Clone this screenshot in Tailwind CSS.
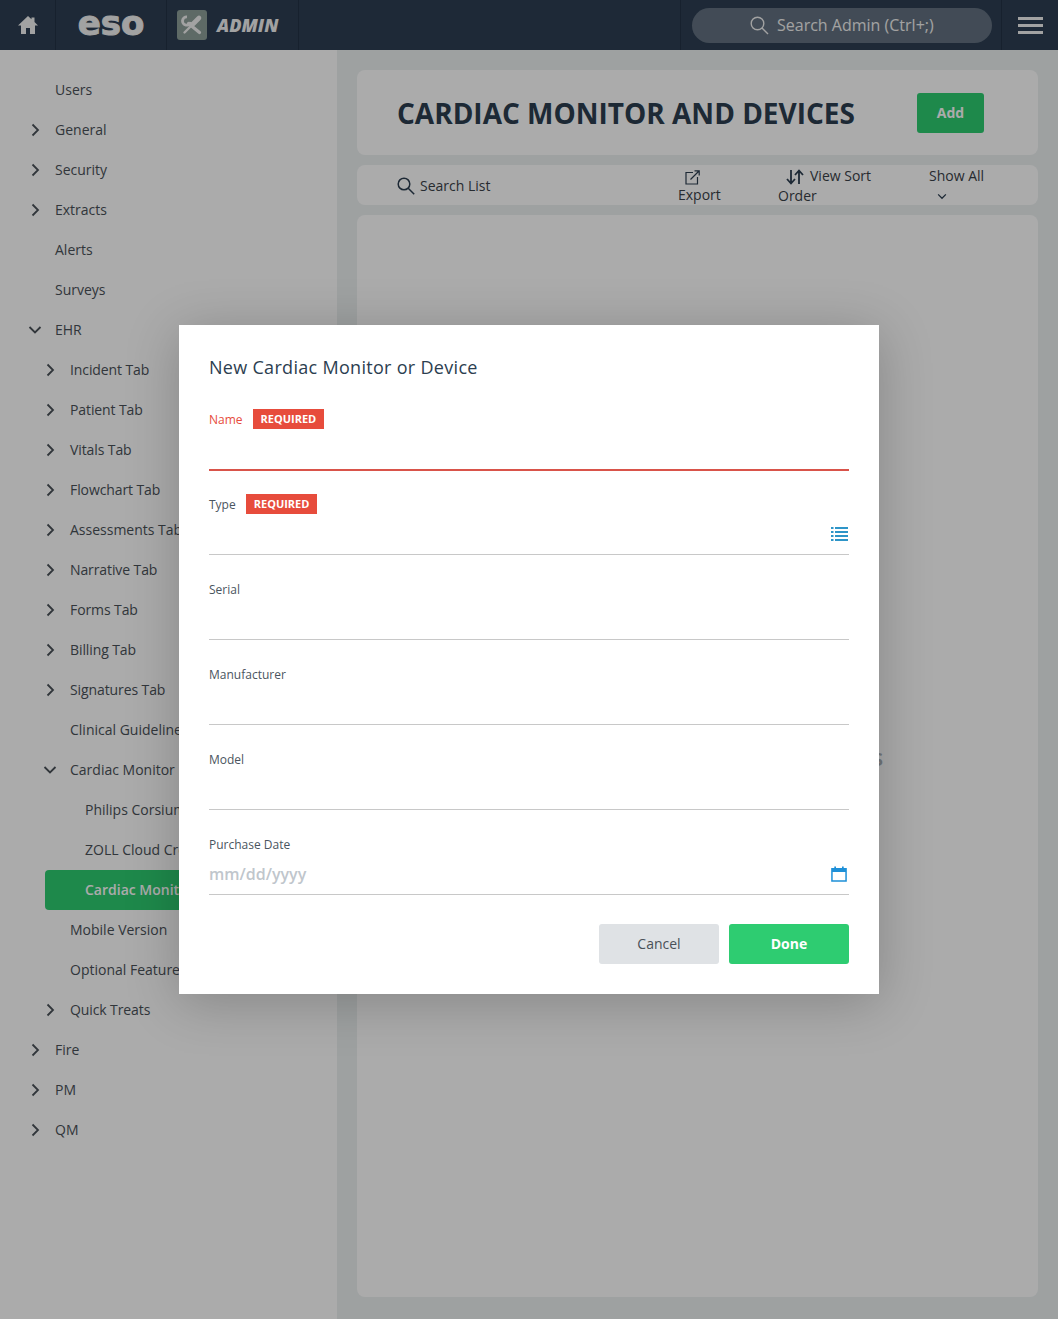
<!DOCTYPE html>
<html lang="en">

<head>
	<meta charset="UTF-8">
	<meta name="viewport" content="width=device-width, initial-scale=1.0">
	<title>Cardiac Monitor and Devices</title>
	<script src="https://cdn.jsdelivr.net/npm/@tailwindcss/browser@4"></script>
</head>

<body class="relative h-[1319px] w-[1058px] overflow-hidden bg-[#ecf0f1] font-['Open_Sans',sans-serif] text-[14px] text-[#4a5158]">

	<svg class="hidden">
		<symbol id="chev-right" viewBox="0 0 10 14"><path d="M2.5 1.5 8 7l-5.500 5.500" fill="none" stroke="currentColor" stroke-width="1.800"/></symbol>
		<symbol id="chev-down" viewBox="0 0 14 10"><path d="M1.500 2 7 7.500 12.500 2" fill="none" stroke="currentColor" stroke-width="1.800"/></symbol>
	</svg>

	<!-- Top bar -->
	<header class="flex h-[50px] items-stretch bg-[#2d3e53] text-[#f2f2f2]">
		<div class="flex w-[56px] shrink-0 items-center justify-center border-r border-[#233245]">
			<svg class="h-5 w-5" viewBox="0 0 20 20" fill="currentColor"><path d="M10 1 0 10.500h3V19h5v-6h4v6h5v-8.500h3l-3.500-3.400V2.500h-3v1.800z"/></svg>
		</div>
		<div class="flex w-[111px] shrink-0 items-center justify-center border-r border-[#233245] pb-[4px]">
			<span class="font-['DejaVu_Sans',sans-serif] text-[34px] leading-none font-bold text-[#f2f2f2] [-webkit-text-stroke:1px_#f2f2f2]">eso</span>
		</div>
		<div class="flex w-[132px] shrink-0 items-center border-r border-[#233245] pl-[10px]">
			<div class="flex h-[30px] w-[30px] items-center justify-center rounded-[3px] bg-[#8c9f99]">
				<svg class="h-[22px] w-[22px]" viewBox="0 0 22 22" fill="none" stroke="#f2f2f2" stroke-linecap="round">
					<path d="M7.500 9.500 18.500 18.500" stroke-width="3.200"/>
					<path d="M6 2.800A4.200 4.200 0 1 0 9.800 8" stroke-width="2.800" stroke-linecap="butt"/>
					<path d="M18 4 12 10" stroke-width="4.600"/>
					<path d="M11 11 3.500 18.500" stroke-width="2.400"/>
				</svg>
			</div>
			<span class="ml-[10px] text-[18px] font-extrabold italic">ADMIN</span>
		</div>
		<div class="w-[382px] shrink-0 border-r border-[#233245]"></div>
		<div class="flex w-[321px] shrink-0 items-center border-r border-[#233245] pl-[11px]">
			<div class="flex h-[35px] w-[300px] items-center rounded-full bg-[#637180] pl-[58px] text-[16px] text-[#f2f2f2]">
				<svg class="mr-2 h-[19px] w-[19px]" viewBox="0 0 19 19" fill="none" stroke="currentColor" stroke-width="1.400"><circle cx="7.500" cy="7.500" r="6.300"/><path d="m12 12 6 6"/></svg>
				Search Admin (Ctrl+;)
			</div>
		</div>
		<div class="flex flex-1 items-center justify-center pl-[1px]">
			<div class="flex w-[25px] flex-col gap-[4px]">
				<div class="h-[3px] bg-[#f2f2f2]"></div>
				<div class="h-[3px] bg-[#f2f2f2]"></div>
				<div class="h-[3px] bg-[#f2f2f2]"></div>
			</div>
		</div>
	</header>

	<div class="flex h-[1269px]">
		<!-- Sidebar tree -->
		<nav class="h-full w-[337px] shrink-0 bg-white pt-5 leading-[40px] whitespace-nowrap">
			<div class="h-10 pl-[55px]">Users</div>
			<div class="flex h-10 items-center pl-[30px]"><svg class="mr-[15px] h-[14px] w-[10px]"><use href="#chev-right"/></svg>General</div>
			<div class="flex h-10 items-center pl-[30px]"><svg class="mr-[15px] h-[14px] w-[10px]"><use href="#chev-right"/></svg>Security</div>
			<div class="flex h-10 items-center pl-[30px]"><svg class="mr-[15px] h-[14px] w-[10px]"><use href="#chev-right"/></svg>Extracts</div>
			<div class="h-10 pl-[55px]">Alerts</div>
			<div class="h-10 pl-[55px]">Surveys</div>
			<div class="flex h-10 items-center pl-[28px]"><svg class="mr-[13px] h-[10px] w-[14px]"><use href="#chev-down"/></svg>EHR</div>
			<div class="flex h-10 items-center pl-[45px] tracking-[-0.1px]"><svg class="mr-[15px] h-[14px] w-[10px]"><use href="#chev-right"/></svg>Incident Tab</div>
			<div class="flex h-10 items-center pl-[45px] tracking-[-0.1px]"><svg class="mr-[15px] h-[14px] w-[10px]"><use href="#chev-right"/></svg>Patient Tab</div>
			<div class="flex h-10 items-center pl-[45px] tracking-[-0.1px]"><svg class="mr-[15px] h-[14px] w-[10px]"><use href="#chev-right"/></svg>Vitals Tab</div>
			<div class="flex h-10 items-center pl-[45px] tracking-[-0.1px]"><svg class="mr-[15px] h-[14px] w-[10px]"><use href="#chev-right"/></svg>Flowchart Tab</div>
			<div class="flex h-10 items-center pl-[45px]"><svg class="mr-[15px] h-[14px] w-[10px]"><use href="#chev-right"/></svg>Assessments Tab</div>
			<div class="flex h-10 items-center pl-[45px] tracking-[-0.1px]"><svg class="mr-[15px] h-[14px] w-[10px]"><use href="#chev-right"/></svg>Narrative Tab</div>
			<div class="flex h-10 items-center pl-[45px] tracking-[-0.1px]"><svg class="mr-[15px] h-[14px] w-[10px]"><use href="#chev-right"/></svg>Forms Tab</div>
			<div class="flex h-10 items-center pl-[45px] tracking-[-0.1px]"><svg class="mr-[15px] h-[14px] w-[10px]"><use href="#chev-right"/></svg>Billing Tab</div>
			<div class="flex h-10 items-center pl-[45px] tracking-[-0.1px]"><svg class="mr-[15px] h-[14px] w-[10px]"><use href="#chev-right"/></svg>Signatures Tab</div>
			<div class="h-10 pl-[70px]">Clinical Guidelines</div>
			<div class="flex h-10 items-center pl-[43px]"><svg class="mr-[13px] h-[10px] w-[14px]"><use href="#chev-down"/></svg>Cardiac Monitor</div>
			<div class="h-10 pl-[85px]">Philips Corsium</div>
			<div class="h-10 w-[190px] overflow-hidden pl-[85px]">ZOLL Cloud Credentials</div>
			<div class="ml-[45px] h-10 w-[150px] overflow-hidden rounded-[4px] bg-[#2ecc71] pl-10 font-semibold text-white">Cardiac Monitor and Devices</div>
			<div class="h-10 pl-[70px]">Mobile Version</div>
			<div class="h-10 pl-[70px]">Optional Features</div>
			<div class="flex h-10 items-center pl-[45px] tracking-[-0.1px]"><svg class="mr-[15px] h-[14px] w-[10px]"><use href="#chev-right"/></svg>Quick Treats</div>
			<div class="flex h-10 items-center pl-[30px]"><svg class="mr-[15px] h-[14px] w-[10px]"><use href="#chev-right"/></svg>Fire</div>
			<div class="flex h-10 items-center pl-[30px]"><svg class="mr-[15px] h-[14px] w-[10px]"><use href="#chev-right"/></svg>PM</div>
			<div class="flex h-10 items-center pl-[30px]"><svg class="mr-[15px] h-[14px] w-[10px]"><use href="#chev-right"/></svg>QM</div>
		</nav>

		<!-- Main column -->
		<main class="flex w-[721px] flex-col gap-[10px] px-5 pt-5">
			<section class="flex h-[85px] items-center justify-between rounded-lg bg-white pr-[54px] pl-10">
				<h1 class="pt-[1px] text-[28px] font-bold text-[#2c3e50]">CARDIAC MONITOR AND DEVICES</h1>
				<button class="mt-[1px] h-10 w-[67px] rounded-[3px] bg-[#2ecc71] pb-[1px] font-bold text-white">Add</button>
			</section>

			<section class="flex h-10 rounded-lg bg-white leading-[20px] text-[#3a4148]">
				<div class="flex w-[321px] items-center pt-[1px] pl-10">
					<svg class="mr-[5px] h-[18px] w-[18px]" viewBox="0 0 18 18" fill="none" stroke="#2c3e50" stroke-width="1.500"><circle cx="7" cy="7" r="5.800"/><path d="m11.200 11.200 6 6"/></svg>
					Search List
				</div>
				<div class="w-[100px] pt-[5px]">
					<svg class="ml-[7px] h-[15px] w-[15px]" viewBox="0 0 15 15" fill="none" stroke="#2c3e50" stroke-width="1.200"><path d="M8 2.500H1v11.500h11.500V7M5.500 9.500 14 1M9.500 .8H14.200V5.500"/></svg>
					<div>Export</div>
				</div>
				<div class="w-[151px] pt-[1px]">
					<div class="flex items-center pl-2">
						<svg class="mt-[1px] mr-[6px] h-[16px] w-[18px]" viewBox="0 0 18 16" fill="none" stroke="#2c3e50" stroke-width="1.800"><path d="M5 1v13M1 10l4 4.500L9 10M13 15V2M9 6l4-4.500L17 6"/></svg>
						View Sort
					</div>
					<div>Order</div>
				</div>
				<div class="pt-[1px]">
					<div>Show All</div>
					<svg class="mt-[7px] ml-2 h-[7px] w-[10px] text-[#2c3e50]"><use href="#chev-down"/></svg>
				</div>
			</section>

			<section class="flex h-[1082px] items-center justify-center rounded-lg bg-white pt-[2px] text-[24px] font-semibold tracking-[0.27px] text-[#aab0b5]">
				No Cardiac Monitors or Devices
			</section>
		</main>
	</div>

	<!-- Dimmed backdrop -->
	<div class="absolute inset-0 bg-black/33"></div>

	<!-- Dialog -->
	<div class="absolute top-[325px] left-[179px] h-[669px] w-[700px] bg-white px-[30px] shadow-[0_8px_50px_rgba(0,0,0,0.22)]">
		<h2 class="mt-[29px] h-[31px] text-[18px] leading-[27px] font-medium tracking-[0.3px] text-[#2c3e50]">New Cardiac Monitor or Device</h2>

		<div class="h-[86px] border-b-2 border-[#d9534a] pt-[24px]">
			<div class="flex h-5 items-center text-[12px] text-[#e74c3c]"><span class="mt-[2px]">Name</span><span class="ml-[10px] flex h-5 items-center bg-[#e74c3c] px-2 text-[11px] font-bold text-white">REQUIRED</span></div>
		</div>
		<div class="flex h-[84px] flex-col border-b border-[#c8c8c8] pt-[23px]">
			<div class="flex h-5 items-center text-[12px] text-[#4a5560]"><span class="mt-[2px]">Type</span><span class="ml-[10px] flex h-5 items-center bg-[#e74c3c] px-2 text-[11px] font-bold text-white">REQUIRED</span></div>
			<div class="flex flex-1 items-center justify-end pr-[1px] pb-[1px]">
				<svg class="h-[14px] w-[17px]" viewBox="0 0 17 14" fill="#2e95c8"><path d="M0 0h2.500v2H0zM4 0h13v2H4zM0 4h2.500v2H0zM4 4h13v2H4zM0 8h2.500v2H0zM4 8h13v2H4zM0 12h2.500v2H0zM4 12h13v2H4z"/></svg>
			</div>
		</div>
		<div class="h-[85px] border-b border-[#c8c8c8] pt-[24px]"><div class="flex h-5 items-center pt-[2px] text-[12px] text-[#4a5560]">Serial</div></div>
		<div class="h-[85px] border-b border-[#c8c8c8] pt-[24px]"><div class="flex h-5 items-center pt-[2px] text-[12px] text-[#4a5560]">Manufacturer</div></div>
		<div class="h-[85px] border-b border-[#c8c8c8] pt-[24px]"><div class="flex h-5 items-center pt-[2px] text-[12px] text-[#4a5560]">Model</div></div>
		<div class="flex h-[85px] flex-col border-b border-[#c8c8c8] pt-[24px]">
			<div class="flex h-5 items-center pt-[2px] text-[12px] text-[#4a5560]">Purchase Date</div>
			<div class="flex h-[40px] items-center justify-between pr-[2px] text-[16px] font-semibold text-[#c0c6cc]">
				mm/dd/yyyy
				<svg class="mb-[1px] h-[16px] w-[16px]" viewBox="0 0 17 17" fill="none"><path d="M1 3h15v13H1z" stroke="#1e90d8" stroke-width="1.600"/><path d="M1 3h15v3.500H1zM3.500 0.500h1.800V3H3.500zM11.700 0.500h1.800V3h-1.800z" fill="#1e90d8"/></svg>
			</div>
		</div>

		<div class="mt-[29px] flex justify-end gap-[10px]">
			<button class="h-10 w-[120px] rounded-[3px] bg-[#dfe2e5] pb-[2px] text-[#4a5158]">Cancel</button>
			<button class="h-10 w-[120px] rounded-[3px] bg-[#2ecc71] pb-[2px] font-bold text-white">Done</button>
		</div>
	</div>

</body>

</html>
